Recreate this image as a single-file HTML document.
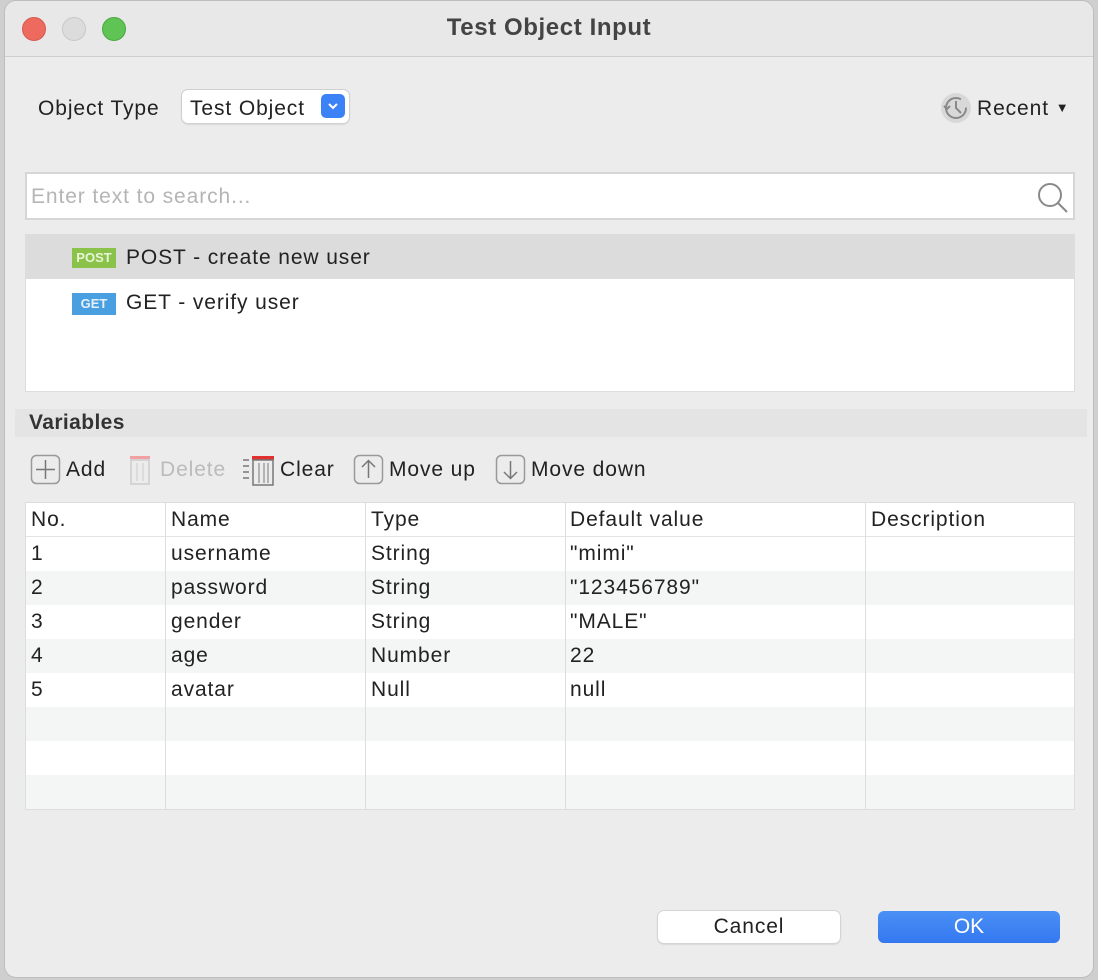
<!DOCTYPE html>
<html><head><meta charset="utf-8"><style>
*{box-sizing:border-box;margin:0;padding:0}
body{width:1098px;height:980px;background:#cfcfcf;font-family:"Liberation Sans",sans-serif;position:relative;overflow:hidden;color:#222}
.win{position:absolute;left:4px;top:0;width:1090px;height:978px;background:#ececec;border-radius:12px;overflow:hidden;border:1px solid #bdbdbd}
.title{position:absolute;left:0;top:0;width:100%;height:56px;background:#e8e8e8;border-bottom:1px solid #cfcfcf;text-align:center;font-weight:bold;font-size:24px;line-height:54px;color:#444;letter-spacing:0.6px}
.dot{position:absolute;top:16px;width:24px;height:24px;border-radius:50%}
.abs{position:absolute}
.t20{font-size:21px;letter-spacing:0.9px}
.tbl{position:absolute;left:20px;top:501px;width:1050px;height:308px;background:#fff;border:1px solid #ddd}
.row{position:absolute;left:0;width:100%;height:34px;font-size:21px;line-height:34px;letter-spacing:0.9px}
.row span{position:absolute}
.vl{position:absolute;top:0;width:1px;height:306px;background:#ddd}
</style></head><body>
<div class="win">
<div class="title">Test Object Input
<div class="dot" style="left:17px;background:#ee6a5f;border:1px solid #d5584e"></div>
<div class="dot" style="left:57px;background:#dcdcdc;border:1px solid #c8c8c8"></div>
<div class="dot" style="left:97px;background:#5fc453;border:1px solid #4aa83f"></div>
</div>
<div class="abs t20" style="left:33px;top:96px">Object Type</div>
<div class="abs" style="left:177px;top:89px;width:167px;height:33px;background:#fff;border-radius:6px;box-shadow:0 0 0 1px #d0d0d0,0 1px 2px rgba(0,0,0,.2)">
<span class="abs t20" style="left:8px;top:7px">Test Object</span>
<div class="abs" style="left:139px;top:4px;width:24px;height:24px;border-radius:5px;background:#3b82f6">
<svg width="24" height="24"><path d="M8 10l4 4 4-4" stroke="#fff" stroke-width="2" fill="none"/></svg></div>
</div>
<svg class="abs" style="left:935px;top:91px" width="32" height="32"><circle cx="16" cy="16" r="15" fill="#d8d8d8"/><circle cx="16" cy="16" r="10" fill="none" stroke="#888" stroke-width="2" stroke-dasharray="52 10"/><path d="M16 9v7l5 5" stroke="#888" stroke-width="2" fill="none"/><path d="M4 14l3 3 3-3" stroke="#888" stroke-width="2" fill="none"/></svg>
<div class="abs t20" style="left:972px;top:96px">Recent <span style="font-size:13px;vertical-align:3px">▼</span></div>
<div class="abs" style="left:20px;top:171px;width:1050px;height:48px;background:#fff;border:2px solid #d6d6d6">
<span class="abs t20" style="left:4px;top:11px;color:#b5b5b5">Enter text to search...</span>
<svg class="abs" style="left:1008px;top:6px" width="36" height="36"><circle cx="15" cy="15" r="11" fill="none" stroke="#8a8a8a" stroke-width="2"/><path d="M23 23l9 9" stroke="#8a8a8a" stroke-width="2"/></svg>
</div>
<div class="abs" style="left:20px;top:233px;width:1050px;height:158px;background:#fff;border:1px solid #ddd">
<div class="abs" style="left:0;top:0;width:100%;height:44px;background:#dcdcdc"></div>
<div class="abs" style="left:46px;top:13px;width:44px;height:20px;background:#8bc34a;color:#e8f5d8;font-size:13px;font-weight:bold;text-align:center;line-height:20px">POST</div>
<span class="abs t20" style="left:100px;top:11px">POST - create new user</span>
<div class="abs" style="left:46px;top:58px;width:44px;height:22px;background:#4a9fe0;color:#e5f1fb;font-size:13px;font-weight:bold;text-align:center;line-height:22px">GET</div>
<span class="abs t20" style="left:100px;top:56px">GET - verify user</span>
</div>
<div class="abs" style="left:10px;top:408px;width:1072px;height:28px;background:#e4e4e4"></div>
<div class="abs t20" style="left:24px;top:410px;font-weight:bold;color:#333;letter-spacing:0.4px">Variables</div>
<svg class="abs" style="left:25px;top:453px" width="32" height="32"><rect x="1.5" y="1.5" width="28" height="28" rx="5" fill="none" stroke="#999" stroke-width="1.5"/><path d="M15.5 6v19M6 15.5h19" stroke="#777" stroke-width="1.5"/></svg>
<span class="abs t20" style="left:61px;top:457px">Add</span>
<svg class="abs" style="left:122px;top:450px" width="26" height="36"><rect x="3" y="5" width="20" height="3" fill="#f0a0a0"/><rect x="4" y="9" width="18" height="24" fill="none" stroke="#ccc" stroke-width="1.5"/><path d="M10 12v18M16 12v18" stroke="#ccc"/></svg>
<span class="abs t20" style="left:155px;top:457px;color:#bbb">Delete</span>
<svg class="abs" style="left:238px;top:450px" width="36" height="36"><path d="M0 9h6M0 15h6M0 21h6M0 27h6" stroke="#777" stroke-width="1.5"/><rect x="9" y="5" width="22" height="4" fill="#e03030"/><rect x="10" y="9" width="20" height="25" fill="none" stroke="#777" stroke-width="1.5"/><path d="M16 12v20M21 12v20M25 12v20" stroke="#777"/></svg>
<span class="abs t20" style="left:275px;top:457px">Clear</span>
<svg class="abs" style="left:348px;top:453px" width="32" height="32"><rect x="1.5" y="1.5" width="28" height="28" rx="5" fill="none" stroke="#999" stroke-width="1.5"/><path d="M15.5 7v17M9 13l6.5-6.5L22 13" stroke="#777" stroke-width="1.5" fill="none"/></svg>
<span class="abs t20" style="left:384px;top:457px">Move up</span>
<svg class="abs" style="left:490px;top:453px" width="32" height="32"><rect x="1.5" y="1.5" width="28" height="28" rx="5" fill="none" stroke="#999" stroke-width="1.5"/><path d="M15.5 7v17M9 18l6.5 6.5L22 18" stroke="#777" stroke-width="1.5" fill="none"/></svg>
<span class="abs t20" style="left:526px;top:457px">Move down</span>
<div class="tbl">
<div class="row" style="top:34px;background:#fff"></div>
<div class="row" style="top:68px;background:#f4f5f5"></div>
<div class="row" style="top:136px;background:#f4f5f5"></div>
<div class="row" style="top:204px;background:#f4f5f5"></div>
<div class="row" style="top:272px;background:#f4f5f5"></div>
<div class="abs" style="left:0;top:33px;width:100%;height:1px;background:#e4e4e4"></div>
<div class="vl" style="left:139px"></div><div class="vl" style="left:339px"></div><div class="vl" style="left:539px"></div><div class="vl" style="left:839px"></div>
<div class="row" style="top:0"><span style="left:5px">No.</span><span style="left:145px">Name</span><span style="left:345px">Type</span><span style="left:544px">Default value</span><span style="left:845px">Description</span></div>
<div class="row" style="top:34px"><span style="left:5px">1</span><span style="left:145px">username</span><span style="left:345px">String</span><span style="left:544px">"mimi"</span></div>
<div class="row" style="top:68px"><span style="left:5px">2</span><span style="left:145px">password</span><span style="left:345px">String</span><span style="left:544px">"123456789"</span></div>
<div class="row" style="top:102px"><span style="left:5px">3</span><span style="left:145px">gender</span><span style="left:345px">String</span><span style="left:544px">"MALE"</span></div>
<div class="row" style="top:136px"><span style="left:5px">4</span><span style="left:145px">age</span><span style="left:345px">Number</span><span style="left:544px">22</span></div>
<div class="row" style="top:170px"><span style="left:5px">5</span><span style="left:145px">avatar</span><span style="left:345px">Null</span><span style="left:544px">null</span></div>
</div>
<div class="abs" style="left:653px;top:910px;width:182px;height:32px;background:#fff;border-radius:6px;box-shadow:0 0 0 1px #d4d4d4,0 1px 2px rgba(0,0,0,.2);text-align:center;line-height:32px;font-size:21px;letter-spacing:0.9px">Cancel</div>
<div class="abs" style="left:873px;top:910px;width:182px;height:32px;background:linear-gradient(#4a90f5,#3478f0);border-radius:6px;text-align:center;line-height:32px;font-size:21px;color:#fff">OK</div>
</div>
</body></html>
